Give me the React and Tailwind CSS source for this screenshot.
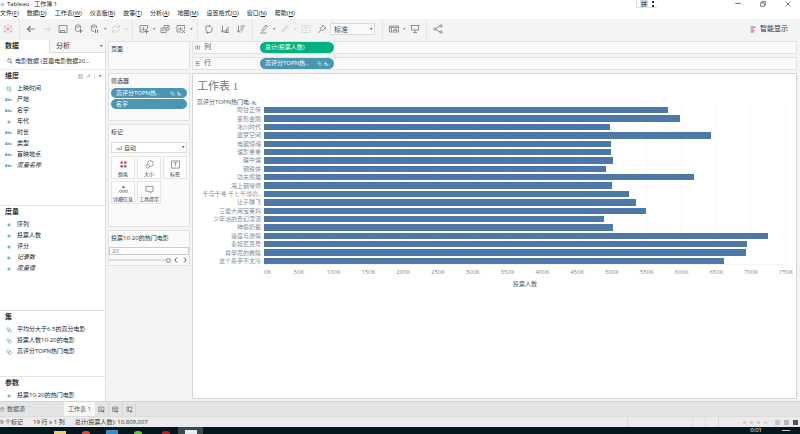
import { useState } from 'react';

const MENUS = [
    ['文件', 'F'],
    ['数据', 'D'],
    ['工作表', 'W'],
    ['仪表板', 'B'],
    ['故事', 'T'],
    ['分析', 'A'],
    ['地图', 'M'],
    ['设置格式', 'O'],
    ['窗口', 'N'],
    ['帮助', 'H'],
];

const DIMENSIONS = [
    { name: '上映时间', type: 'datetime' },
    { name: '产地', type: 'abc' },
    { name: '名字', type: 'abc' },
    { name: '年代', type: 'number' },
    { name: '时长', type: 'abc' },
    { name: '类型', type: 'abc' },
    { name: '首映地点', type: 'abc' },
    { name: '度量名称', type: 'abc', generated: true },
];

const MEASURES = [
    { name: '序列', type: 'measure' },
    { name: '投票人数', type: 'measure' },
    { name: '评分', type: 'measure' },
    { name: '记录数', type: 'calc', generated: true },
    { name: '度量值', type: 'measure', generated: true },
];

const SETS = [
    { name: '平均分大于6.5的高分电影', type: 'set' },
    { name: '投票人数10-20的电影', type: 'set' },
    { name: '高评分TOPN热门电影', type: 'set' },
];

const PARAMETERS = [{ name: '投票10-20的热门电影', type: 'measure' }];

const MAX_VOTES = 750;

// votes in thousands
const MOVIES = [
    { name: '阿甘正传', votes: 580 },
    { name: '变形金刚', votes: 597 },
    { name: '冰川时代', votes: 497 },
    { name: '盗梦空间', votes: 642 },
    { name: '电锯惊魂', votes: 499 },
    { name: '谍影重重', votes: 498 },
    { name: '碟中谍', votes: 501 },
    { name: '钢铁侠', votes: 492 },
    { name: '功夫熊猫', votes: 618 },
    { name: '海上钢琴师', votes: 500 },
    { name: '千与千寻 千と千尋の..', votes: 525 },
    { name: '让子弹飞', votes: 534 },
    { name: '三傻大闹宝莱坞', votes: 549 },
    { name: '少年派的奇幻漂流', votes: 488 },
    { name: '神偷奶爸', votes: 501 },
    { name: '速度与激情', votes: 724 },
    { name: '泰坦尼克号', votes: 694 },
    { name: '肖申克的救赎', votes: 692 },
    { name: '这个杀手不太冷', votes: 661 },
];

const TICKS = Array.from({ length: 16 }, (_, i) => i * 50);

function Svg({ children, className = 'size-[10px]' }) {
    return (
        <svg className={className} viewBox="0 0 20 20" fill="none" stroke="currentColor" strokeWidth="1.6" aria-hidden="true">
            {children}
        </svg>
    );
}

const ICONS = {
    logo: (
        <g stroke="#d3949a">
            <path d="M10 6v8M6 10h8" strokeWidth="2" />
            <path d="M10 1v3M10 16v3M1 10h3M16 10h3M4 3v4M2 5h4M16 3v4M14 5h4M4 13v4M2 15h4M16 13v4M14 15h4" />
        </g>
    ),
    back: <path d="M17 10H3M9 4l-6 6 6 6" strokeWidth="2.4" />,
    forward: <path d="M3 10h14M11 4l6 6-6 6" />,
    save: <path d="M2 3h16v14H2zM5 17v-4h8v4M8 15v2" />,
    addData: (
        <>
            <path d="M3 4v9c0 1 2 2 5 2M13 4v5M3 4c0-3 10-3 10 0s-10 3-10 0" />
            <path d="M13 10v8M9 14h8" strokeWidth="2" />
        </>
    ),
    pause: (
        <>
            <path d="M3 4v9c0 1 2 2 5 2M13 4v4M3 4c0-3 10-3 10 0s-10 3-10 0" />
            <path d="M11 11v7M15 11v7" strokeWidth="2" />
        </>
    ),
    refresh: <path d="M3 10a7 7 0 0 1 13-3M17 2v5h-5M17 10a7 7 0 0 1-13 3M3 18v-5h5" />,
    newSheet: (
        <>
            <path d="M11 16H2V3h15v7M6 13V9M9 13V6M12 13v-3" />
            <path d="M15 11v8M11 15h8" strokeWidth="2.2" />
        </>
    ),
    duplicate: <path d="M2 8h10v9H2zM8 8V3h10v9h-6M5 14v-3M8 14v-4M12 9V6M15 9V5" />,
    clear: (
        <>
            <path d="M11 16H2V3h15v7M6 13V9M9 13V6M12 11V8" />
            <path d="M12 12l6 6M18 12l-6 6" strokeWidth="2" />
        </>
    ),
    swap: <path d="M4 15V4h8M10 2l3 2-3 2M16 6v8l-4 3H6M8 15l-3 2 3 2" />,
    sortAsc: <path d="M5 3v13M2 13l3 4 3-4M10 17v-5M13 17V9M16 17V5M9 17h9" />,
    sortDesc: <path d="M5 3v13M2 13l3 4 3-4M9 4h9M9 8h7M9 12h5M9 16h2" />,
    highlight: <path d="M6 12l8-10 3 3-8 9H6zM2 18h13" />,
    clip: <path d="M6 11l6-7c2-2 5 0 3 3l-7 8c-2 2-5 0-3-2l6-7" />,
    text: <path d="M2 3h16v14H2zM6 7h8M10 7v7" strokeDasharray="3 1" />,
    pin: <path d="M11 2l7 6-3 1-4 5-5-5 5-4zM8 12l-5 6" />,
    showCards: (
        <>
            <path d="M1 4h18v12H1zM1 7h18M5 7v9" />
            <path d="M9 14v-3M12 14V9M15 14v-4" strokeWidth="2" />
        </>
    ),
    present: <path d="M1 3h18M3 3v9h14V3M10 12v5M6 17h8" />,
    share: (
        <>
            <path d="M6 9l8-5M6 11l8 5" />
            <circle cx="4" cy="10" r="2.4" />
            <circle cx="16" cy="4" r="2.4" />
            <circle cx="16" cy="16" r="2.4" />
        </>
    ),
    showMe: (
        <>
            <path d="M2 3h14M2 17h9" stroke="#55596b" strokeWidth="2.5" />
            <path d="M2 8h8M2 12h12" stroke="#d0646c" strokeWidth="2.5" />
        </>
    ),
    newDashboard: (
        <>
            <path d="M10 16H2V3h15v6M2 8h15M8 8v8" />
            <path d="M14 11v8M10 15h8" strokeWidth="2.2" />
        </>
    ),
    newStory: (
        <>
            <path d="M9 15H3V3h14v6M7 3v12" />
            <path d="M14 11v8M10 15h8" strokeWidth="2.2" />
        </>
    ),
    database: <path d="M3 4v11c0 3 12 3 12 0V4M3 4c0-3 12-3 12 0s-12 3-12 0" />,
    barMark: <path d="M3 17v-5M8 17V9M13 17v-7M18 17V3" strokeWidth="2.2" />,
};

function Icon({ name, className }) {
    return <Svg className={className}>{ICONS[name]}</Svg>;
}

function ToolButton({ name, label, dim, caret }) {
    return (
        <>
            <button
                aria-label={label}
                className={`flex w-4 shrink-0 items-center justify-center ${dim ? 'text-[#ccc]' : 'text-[#7a7a7a]'}`}
            >
                <Icon name={name} />
            </button>
            {caret && <Caret className={dim ? 'text-[#ccc]' : 'text-[#999]'} />}
        </>
    );
}

function Caret({ className }) {
    return (
        <svg className={`w-[5px] shrink-0 ${className}`} viewBox="0 0 12 6" fill="currentColor" aria-hidden="true">
            <path d="M2 0h7L5.500 5z" />
        </svg>
    );
}

function Separator() {
    return <span className="mx-[3px] w-px shrink-0 self-stretch bg-[#e6e6e6]" />;
}

function SetIcon({ className }) {
    return (
        <Svg className={className}>
            <circle cx="7" cy="7" r="5" />
            <circle cx="13" cy="13" r="5" />
        </Svg>
    );
}

function FieldIcon({ type }) {
    if (type === 'abc') {
        return <span className="text-[4px] font-bold text-[#4996b2]">Abc</span>;
    }
    if (type === 'set') {
        return <SetIcon className="size-1.5 text-[#4996b2]" />;
    }
    if (type === 'datetime') {
        return (
            <Svg className="size-1.5 text-[#4996b2]">
                <path d="M9 15H3V3h12v5M3 7h12" />
                <circle cx="14" cy="14" r="4" />
            </Svg>
        );
    }
    return (
        <Svg className={`size-1 ${type === 'number' ? 'text-[#4996b2]' : 'text-[#35a77f]'}`}>
            <path d="M7 2v16M13 2v16M2 7h16M2 13h16" strokeWidth="2.500" />
            {type === 'calc' && <path d="M0 10h4" strokeWidth="3" />}
        </Svg>
    );
}

function FieldSection({ title, fields, className, children }) {
    return (
        <section className={className}>
            <div className="flex h-[13px] items-center justify-between pl-[5px] pr-0.5">
                <h2 className="text-[7px] font-semibold text-[#333]">{title}</h2>
                {children}
            </div>
            <ul>
                {fields.map((field) => (
                    <li key={field.name} className="flex h-[11px] items-center text-[6px] text-[#222]">
                        <span className="flex w-[17px] shrink-0 items-center justify-center">
                            <FieldIcon type={field.type} />
                        </span>
                        <span className={field.generated ? 'italic' : ''}>{field.name}</span>
                    </li>
                ))}
            </ul>
        </section>
    );
}

function DataPane() {
    return (
        <aside className="flex w-[105px] shrink-0 flex-col bg-white">
            <div className="flex h-[13px] text-[7px] text-[#333]" role="tablist">
                <button role="tab" aria-selected="true" className="w-[49px] pl-[5px] text-left font-semibold">
                    数据
                </button>
                <button
                    role="tab"
                    aria-selected="false"
                    className="flex flex-1 items-center justify-between border-b border-l border-[#ddd] bg-[#f7f7f7] pl-1.5 pr-px"
                >
                    分析
                    <Caret className="text-[#777]" />
                </button>
            </div>
            <button className="flex h-[17px] items-center gap-0.5 border-b border-[#eee] pl-[7px] text-[6px] text-[#333]">
                <Icon name="addData" className="size-1.5 text-[#555]" />
                电影数据 (豆瓣电影数据20...
            </button>
            <FieldSection title="维度" fields={DIMENSIONS} className="h-[135px]">
                <div className="flex items-center gap-[3px] text-[#777]">
                    <Svg className="size-[5px]">
                        <path d="M1 3h18v14H1zM7 3v14M13 3v14" />
                    </Svg>
                    <Svg className="size-[5px]">
                        <circle cx="12" cy="7" r="5" />
                        <path d="M8 11l-7 7" />
                    </Svg>
                    <span className="h-[5px] w-px bg-[#ddd]" />
                    <Caret className="text-[#777]" />
                </div>
            </FieldSection>
            <FieldSection title="度量" fields={MEASURES} className="h-[105px] border-t border-[#e4e4e4]" />
            <FieldSection title="集" fields={SETS} className="h-[66px] border-t border-[#e4e4e4]" />
            <FieldSection title="参数" fields={PARAMETERS} className="flex-1 border-t border-[#e4e4e4]" />
        </aside>
    );
}

function Pill({ children, className, indicators }) {
    return (
        <button className={`flex items-center justify-between rounded-full px-[5px] text-[6px] text-white ${className}`}>
            <span>{children}</span>
            {indicators && (
                <span className="flex items-center gap-0.5">
                    <SetIcon className="size-[5px]" />
                    <Svg className="size-[5px]">
                        <path d="M2 4h5M2 10h10M2 16h16" strokeWidth="3" />
                    </Svg>
                </span>
            )}
        </button>
    );
}

function Card({ title, className, children }) {
    return (
        <section className={`border border-[#e2e2e2] bg-[#fafafa] ${className}`}>
            <h3 className="flex h-[14px] items-center pl-0.5 text-[6px] text-[#333]">{title}</h3>
            {children}
        </section>
    );
}

function MarkButton({ label, children }) {
    return (
        <button className="flex h-[23px] flex-col items-center justify-between whitespace-nowrap border border-[#e6e6e6] bg-white/50 pt-[3px] text-[5px] leading-[7px] text-[#333]">
            <Svg className="size-[9px] text-[#777]">{children}</Svg>
            {label}
        </button>
    );
}

function CardColumn() {
    const [topN, setTopN] = useState(20);

    return (
        <div className="flex w-[87px] shrink-0 flex-col gap-[3px] border-l border-[#ddd] px-0.5 pt-px">
            <Card title="页面" className="h-[29px]" />

            <Card title="筛选器" className="h-[48px]">
                <div className="flex flex-col gap-px px-0.5">
                    <Pill className="h-[10px] bg-[#4996b2]" indicators>
                        高评分TOPN热..
                    </Pill>
                    <Pill className="h-[10px] bg-[#4996b2]">名字</Pill>
                </div>
            </Card>

            <Card title="标记" className="h-[103px]">
                <div className="px-0.5 pt-[3px]">
                    <div className="flex h-[11px] items-center border border-[#ddd] bg-white">
                        <Icon name="barMark" className="ml-1 size-1.5 shrink-0 text-[#666]" />
                        <select aria-label="标记类型" className="h-full flex-1 appearance-none pl-0.5 text-[6px] leading-none text-[#444]">
                            <option>自动</option>
                        </select>
                        <Caret className="text-[#666]" />
                    </div>
                    <div className="mt-[3px] grid grid-cols-3 gap-0.5">
                        <MarkButton label="颜色">
                            <g stroke="none">
                                <circle cx="6" cy="6" r="3" fill="#b4697b" />
                                <circle cx="14" cy="6" r="3" fill="#e0525c" />
                                <circle cx="6" cy="14" r="3" fill="#c9424f" />
                                <circle cx="14" cy="14" r="3" fill="#8e6a86" />
                            </g>
                        </MarkButton>
                        <MarkButton label="大小">
                            <circle cx="12" cy="8" r="6.500" />
                            <circle cx="6" cy="14" r="4" fill="white" />
                        </MarkButton>
                        <MarkButton label="标签">
                            <path d="M1 2h18v16H1zM6 6h8M10 6v8" />
                        </MarkButton>
                        <MarkButton label="详细信息">
                            <circle cx="10" cy="5" r="2" fill="currentColor" />
                            <circle cx="3.500" cy="14" r="2.500" />
                            <circle cx="10" cy="14" r="2.500" />
                            <circle cx="16.500" cy="14" r="2.500" />
                        </MarkButton>
                        <MarkButton label="工具提示">
                            <path d="M2 3h16v11h-3l-3 4-1-4H2z" />
                        </MarkButton>
                    </div>
                </div>
            </Card>

            <Card title="投票10-20的热门电影" className="h-[36px]">
                <input
                    type="text"
                    aria-label="投票10-20的热门电影"
                    value={topN}
                    onChange={(e) => setTopN(Number(e.target.value) || 0)}
                    className="mt-0.5 block h-2 w-full border border-[#ccc] bg-white px-0.5 text-[6px] leading-none text-[#777]"
                />
                <div className="flex h-[10px] items-center gap-px">
                    <input
                        type="range"
                        aria-label="热门电影数量"
                        min="10"
                        max="20"
                        value={topN}
                        onChange={(e) => setTopN(Number(e.target.value))}
                        className="h-[5px] min-w-0 flex-1 appearance-none bg-[linear-gradient(#ddd,#ddd)] bg-[length:100%_2px] bg-center bg-no-repeat [&::-webkit-slider-thumb]:size-[5px] [&::-webkit-slider-thumb]:appearance-none [&::-webkit-slider-thumb]:rounded-full [&::-webkit-slider-thumb]:border [&::-webkit-slider-thumb]:border-[#888] [&::-webkit-slider-thumb]:bg-white"
                    />
                    <button aria-label="上一个" className="flex w-2 justify-center text-[#444]">
                        <Svg className="size-1.5">
                            <path d="M13 2l-7 8 7 8" strokeWidth="3" />
                        </Svg>
                    </button>
                    <button aria-label="下一个" className="flex w-2 justify-center text-[#444]">
                        <Svg className="size-1.5">
                            <path d="M7 2l7 8-7 8" strokeWidth="3" />
                        </Svg>
                    </button>
                </div>
            </Card>
        </div>
    );
}

function Shelf({ label, icon, children }) {
    return (
        <div className="flex h-[13px] items-center border border-[#e2e2e2] bg-[#fafafa] text-[7px] text-[#555]">
            <div className="flex w-[67px] items-center gap-1 pl-0.5">
                <Svg className="size-[5px] text-[#777]">{icon}</Svg>
                {label}
            </div>
            {children}
        </div>
    );
}

function Worksheet() {
    return (
        <section className="flex-1 border border-[#d4d4d4] bg-white pl-1 pr-[10px] pt-1">
            <h1 className="font-['Liberation_Serif','Noto_Sans_CJK_SC',serif] text-[11px] leading-4 text-[#777]">工作表 1</h1>

            <div className="flex h-[12px] items-center pt-1 text-[6px] text-[#555]">
                高评分TOPN热门电..
                <Svg className="size-[5px]">
                    <path d="M2 4h5M2 10h10M2 16h16" strokeWidth="3" />
                </Svg>
            </div>

            <div className="relative flex h-[159px] flex-col">
                <div className="absolute inset-y-0 left-[67px] right-0 flex justify-between border-b border-[#f3f3f3]">
                    {TICKS.map((tick) => (
                        <span key={tick} className="w-px bg-[#f7f7f7]" />
                    ))}
                </div>
                {MOVIES.map((movie) => (
                    <div key={movie.name} className="relative flex min-h-0 flex-1 items-stretch">
                        <span className="flex w-[67px] shrink-0 items-center justify-end whitespace-nowrap pr-[3px] font-['Liberation_Serif','Noto_Sans_CJK_SC',serif] text-[6px] leading-none text-[#888]">
                            {movie.name}
                        </span>
                        <div className="flex-1 py-px">
                            <div className="h-full bg-[#4e79a7]" style={{ width: `${(movie.votes / MAX_VOTES) * 100}%` }} />
                        </div>
                    </div>
                ))}
            </div>

            <div className="ml-[67px] flex h-[14px] items-center justify-between text-[6px] text-[#888]">
                {TICKS.map((tick) => (
                    <span key={tick} className="flex w-0 justify-center whitespace-nowrap first:justify-start">
                        {tick}K
                    </span>
                ))}
            </div>
            <p className="ml-[67px] text-center text-[6px] leading-[10px] text-[#555]">投票人数</p>
        </section>
    );
}

function TitleBar() {
    return (
        <header className="flex h-2 items-center justify-between bg-white text-[#222]">
            <div className="flex items-center gap-0.5 text-[6px] leading-[8px]">
                <Svg className="size-[5px] text-[#6f9bc4]">
                    <path d="M10 1v18M1 10h18M4 4l12 12M16 4L4 16" />
                </Svg>
                Tableau - 工作簿 1
            </div>
            <div className="flex h-full items-center">
                <div className="mr-[68px] flex h-full items-center gap-1 border-b border-l border-[#ddd] px-[3px]">
                    <span className="flex h-[7px] w-2 items-center justify-center bg-[#ddd] text-[6px] leading-none">拼</span>
                    <span className="flex flex-col gap-0.5">
                        <i className="size-0.5 bg-[#222]" />
                        <i className="size-0.5 bg-[#222]" />
                    </span>
                </div>
                <div className="flex items-center text-[#555]">
                    <button aria-label="最小化" className="flex w-[25px] justify-center">
                        <Svg className="size-1.5">
                            <path d="M1 8h18" strokeWidth="3" />
                        </Svg>
                    </button>
                    <button aria-label="还原" className="flex w-[25px] justify-center">
                        <Svg className="size-1.5">
                            <path d="M2 6h12v12H2zM6 6V2h12v12h-4" strokeWidth="2.500" />
                        </Svg>
                    </button>
                    <button aria-label="关闭" className="flex w-[25px] justify-center">
                        <Svg className="size-1.5">
                            <path d="M2 2l16 16M18 2L2 18" strokeWidth="2.500" />
                        </Svg>
                    </button>
                </div>
            </div>
        </header>
    );
}

function Toolbar() {
    return (
        <div className="flex h-[21px] items-center pb-px">
            <ToolButton name="logo" label="起始页" />
            <Separator />
            <ToolButton name="back" label="撤消" />
            <ToolButton name="forward" label="重做" dim />
            <ToolButton name="save" label="保存" />
            <ToolButton name="addData" label="新建数据源" />
            <ToolButton name="pause" label="暂停自动更新" caret />
            <ToolButton name="refresh" label="运行更新" dim caret />
            <Separator />
            <ToolButton name="newSheet" label="新建工作表" caret />
            <ToolButton name="duplicate" label="复制" />
            <ToolButton name="clear" label="清除工作表" caret />
            <Separator />
            <ToolButton name="swap" label="交换行和列" />
            <ToolButton name="sortAsc" label="升序排序" />
            <ToolButton name="sortDesc" label="降序排序" />
            <Separator />
            <ToolButton name="highlight" label="突出显示" caret />
            <ToolButton name="clip" label="组成员" dim caret />
            <ToolButton name="text" label="显示标记标签" dim />
            <ToolButton name="pin" label="固定轴" />
            <div className="mr-1 flex h-[12px] w-[45px] items-center border border-[#ddd] bg-[#f9f9f9]">
                <select aria-label="适合" className="h-full min-w-0 flex-1 appearance-none pl-[3px] text-[7px] leading-none text-[#444]">
                    <option>标准</option>
                </select>
                <Caret className="text-[#777]" />
            </div>
            <Separator />
            <ToolButton name="showCards" label="显示隐藏卡" caret />
            <ToolButton name="present" label="演示模式" />
            <Separator />
            <ToolButton name="share" label="共享" />
            <button className="ml-auto mr-3 flex items-center gap-[3px] text-[7px] text-[#333]">
                <Icon name="showMe" className="size-[7px]" />
                智能显示
            </button>
        </div>
    );
}

function SheetTabs() {
    return (
        <nav className="flex h-[15px] items-stretch border-t border-[#d4d4d4] bg-[#e4e4e4] text-[6px] text-[#555]">
            <button className="flex w-16 items-center gap-0.5">
                <Icon name="database" className="size-[5px]" />
                数据源
            </button>
            <button className="w-[31px] bg-[#f7f7f7]">工作表 1</button>
            <button aria-label="新建工作表" className="flex w-[14px] items-center justify-center border-r border-[#d8d8d8]">
                <Icon name="newSheet" className="size-[7px]" />
            </button>
            <button aria-label="新建仪表板" className="flex w-[14px] items-center justify-center border-r border-[#d8d8d8]">
                <Icon name="newDashboard" className="size-[7px]" />
            </button>
            <button aria-label="新建故事" className="flex w-[13px] items-center justify-center border-r border-[#d8d8d8]">
                <Icon name="newStory" className="size-[7px]" />
            </button>
        </nav>
    );
}

function StatusBar() {
    return (
        <footer className="flex h-[11px] items-center gap-[10px] border-t border-[#dcdcdc] bg-[#ebebeb] text-[6px] text-[#333]">
            <span>9 个标记</span>
            <span>19 行 x 1 列</span>
            <span>总计(投票人数): 10,809,007</span>
            <div className="ml-auto flex items-center gap-1 pr-0.5">
                <span className="mr-[60px] h-[10px] w-px bg-[#d8d8d8]" />
                <span className="mr-2 h-[10px] w-px bg-[#dedede]" />
                <span className="mr-2 h-[10px] w-px bg-[#dedede]" />
                <span className="mr-5 h-[10px] w-px bg-[#d8d8d8]" />
                <i className="size-[3px] rounded-full bg-[#ccc]" />
                <i className="size-[3px] rounded-full bg-[#ccc]" />
                <i className="size-[3px] rounded-full bg-[#ccc]" />
                <i className="mr-1 size-[3px] rounded-full bg-[#ccc]" />
                <i className="size-[5px] bg-[#c8c8c8]" />
                <i className="size-[5px] bg-[#b8b8b8]" />
                <i className="size-[5px] bg-[#555]" />
            </div>
        </footer>
    );
}

function Taskbar() {
    return (
        <div className="flex h-[7px] items-end justify-between bg-[#04171c] pl-[54px] pr-[10px]">
            <div className="flex items-end gap-4">
                <i className="h-[3px] w-3 bg-[#e9cd72]" />
                <i className="h-[3px] w-2 rounded-t-full bg-[#d8493f]" />
                <i className="h-1 w-3 bg-[#3c8ec2]" />
                <i className="h-[3px] w-2 rounded-t-full bg-[#6cc04a]" />
                <i className="ml-1 h-[3px] w-2 rounded-t-full bg-[#b3202c]" />
                <span className="-ml-2 flex h-[7px] w-[25px] items-end justify-center bg-[#3b474b]">
                    <i className="h-1 w-3 bg-[#e6edf2]" />
                </span>
            </div>
            <div className="flex h-full items-center gap-5 text-white">
                <span className="text-[6px] leading-[7px]">0:01</span>
                <i className="h-px w-2 bg-[#ccc]" />
            </div>
        </div>
    );
}

export default function App() {
    return (
        <div className="flex min-h-screen flex-col bg-[#f4f4f4] font-['Open_Sans','Noto_Sans_CJK_SC',sans-serif]">
            <TitleBar />
            <nav className="flex h-[11px] items-center gap-2 bg-white text-[6px] text-[#222]">
                {MENUS.map(([name, key]) => (
                    <button key={key}>
                        {name}(<u>{key}</u>)
                    </button>
                ))}
            </nav>
            <Toolbar />

            <main className="flex flex-1">
                <DataPane />
                <CardColumn />
                <div className="flex min-w-0 flex-1 flex-col gap-[3px] pb-0.5 pr-[3px] pt-px">
                    <Shelf label="列" icon={<path d="M3 2v16M10 2v16M17 2v16" strokeWidth="3" />}>
                        <Pill className="h-[11px] w-[74px] bg-[#00b180]">总计(投票人数)</Pill>
                    </Shelf>
                    <Shelf label="行" icon={<path d="M2 3h16M2 10h16M2 17h16" strokeWidth="3" />}>
                        <Pill className="h-[11px] w-[74px] bg-[#4996b2]" indicators>
                            高评分TOPN热..
                        </Pill>
                    </Shelf>
                    <Worksheet />
                </div>
            </main>

            <SheetTabs />
            <StatusBar />
            <Taskbar />
        </div>
    );
}
